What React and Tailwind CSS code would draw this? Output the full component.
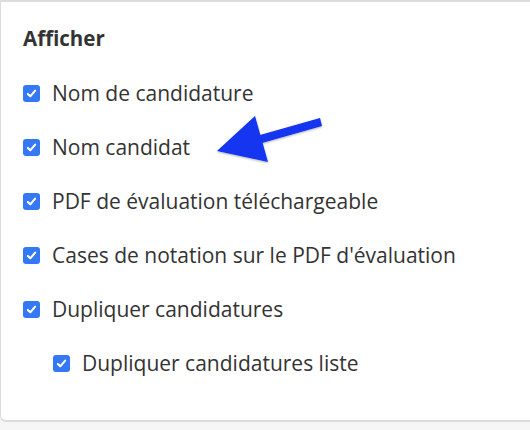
import React from "react";

const Check = () => (
  <span className="flex h-[17px] w-[17px] shrink-0 items-center justify-center rounded-[3px] bg-[#3478f6]">
    <svg viewBox="0 0 16 16" className="h-[13px] w-[13px]" fill="none" stroke="white" strokeWidth="2.6" strokeLinecap="round" strokeLinejoin="round">
      <path d="M3.5 8.5 L6.5 11.5 L12.5 4.5" />
    </svg>
  </span>
);

const Row = ({ label, indent }) => (
  <div className={`flex h-[54px] items-center gap-[12px] ${indent ? "pl-[30px]" : ""}`}>
    <Check />
    <span className="text-[21px] leading-none text-[#333]">{label}</span>
  </div>
);

export default function App() {
  return (
    <div className="h-[430px] w-[530px] overflow-hidden bg-[#f6f6f6]" style={{ fontFamily: '"Open Sans", sans-serif' }}>
      <div className="relative h-[422px] w-[540px] rounded-bl-[6px] border-b-2 border-l border-t-2 border-[#dcdcdc] bg-white pl-[22px] pt-[26px]">
        <h2 className="text-[20.5px] font-bold leading-none text-[#333]">Afficher</h2>
        <div className="mt-[18px] flex flex-col">
          <Row label="Nom de candidature" />
          <Row label="Nom candidat" />
          <Row label="PDF de évaluation téléchargeable" />
          <Row label="Cases de notation sur le PDF d'évaluation" />
          <Row label="Dupliquer candidatures" />
          <Row label="Dupliquer candidatures liste" indent />
        </div>
        <svg className="absolute left-[209px] top-[103px]" width="120" height="65" viewBox="0 0 120 65">
          <defs>
            <filter id="s" x="-20%" y="-20%" width="140%" height="140%">
              <feDropShadow dx="0" dy="1" stdDeviation="1" floodColor="#000" floodOpacity="0.3" />
            </filter>
          </defs>
          <g filter="url(#s)" fill="#1234f0">
            <path d="M110 13 L112 21 L52 38 L50 30 Z" />
            <path d="M7 46 L45 11 L58 57 Z" />
          </g>
        </svg>
      </div>
    </div>
  );
}
